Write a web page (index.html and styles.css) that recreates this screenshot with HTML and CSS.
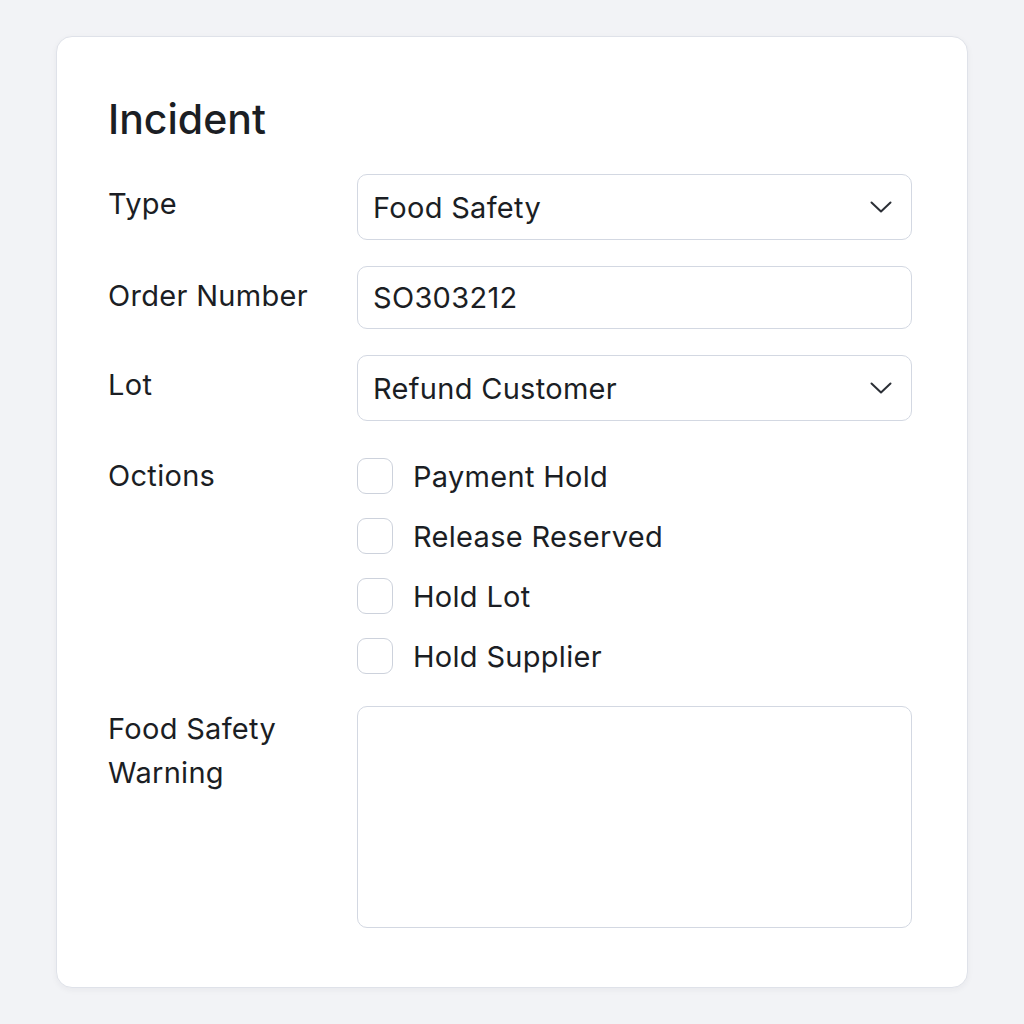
FILE: index.html
```html
<!DOCTYPE html>
<html lang="en">
<head>
<meta charset="utf-8">
<link rel="stylesheet" href="styles.css">
<title>Incident</title>
</head>
<body>
<div class="card">
  <h1 class="title">Incident</h1>
  <div class="form">
    <div class="label">Type</div>
    <div class="field select">
      <span>Food Safety</span>
      <svg class="chev" width="22" height="12" viewBox="0 0 22 12"><path d="M1.5 1.5 L11 10.5 L20.5 1.5" fill="none" stroke="#2b2f36" stroke-width="2" stroke-linecap="round" stroke-linejoin="round"/></svg>
    </div>

    <div class="label">Order Number</div>
    <div class="field input"><span>SO303212</span></div>

    <div class="label">Lot</div>
    <div class="field select">
      <span>Refund Customer</span>
      <svg class="chev" width="22" height="12" viewBox="0 0 22 12"><path d="M1.5 1.5 L11 10.5 L20.5 1.5" fill="none" stroke="#2b2f36" stroke-width="2" stroke-linecap="round" stroke-linejoin="round"/></svg>
    </div>

    <div class="label opt-label">Octions</div>
    <div class="checks">
      <div class="check"><span class="box"></span><span>Payment Hold</span></div>
      <div class="check"><span class="box"></span><span>Release Reserved</span></div>
      <div class="check"><span class="box"></span><span>Hold Lot</span></div>
      <div class="check"><span class="box"></span><span>Hold Supplier</span></div>
    </div>

    <div class="label warn-label">Food Safety<br>Warning</div>
    <div class="textarea"></div>
  </div>
</div>
</body>
</html>
```
FILE: styles.css
```css
* { box-sizing: border-box; }
html, body { margin: 0; padding: 0; }
body {
  width: 1024px;
  height: 1024px;
  background: #f2f3f6;
  font-family: Inter, "Noto Sans", "Liberation Sans", sans-serif;
  color: #1b1e24;
  padding: 36px 56px 0 56px;
}
.card {
  width: 912px;
  height: 952px;
  background: #ffffff;
  border: 1px solid #dfe2e9;
  border-radius: 16px;
  box-shadow: 0 2px 6px rgba(30, 40, 60, 0.05);
  padding: 56px 55px 0 51px;
}
.title {
  margin: 0 0 28px 0;
  font-size: 41px;
  font-weight: 450;
  line-height: 53px;
  letter-spacing: 0;
}
.form {
  display: grid;
  grid-template-columns: 249px 1fr;
  row-gap: 26px;
  align-items: start;
}
.label {
  font-size: 29px;
  line-height: 36px;
  padding-top: 12px;
  letter-spacing: 0.3px;
}
.field {
  height: 66px;
  border: 1px solid #d3d8e2;
  border-radius: 10px;
  display: flex;
  align-items: center;
  justify-content: space-between;
  padding: 0 19px 0 15px;
  font-size: 29px;
  letter-spacing: 0.3px;
}
.input { height: 63px; }
.chev { display: block; }
.opt-label { padding-top: 11px; }
.checks {
  display: flex;
  flex-direction: column;
  gap: 24px;
  padding-top: 11px;
}
.check {
  display: flex;
  align-items: center;
  gap: 20px;
  font-size: 29px;
  height: 36px;
  letter-spacing: 0.3px;
}
.box {
  width: 36px;
  height: 36px;
  border: 1px solid #cdd2dc;
  border-radius: 9px;
  flex: none;
}
.warn-label {
  line-height: 44px;
  padding-top: 7px;
}
.textarea {
  height: 222px;
  border: 1px solid #d3d8e2;
  border-radius: 10px;
  margin-top: 6px;
}
```
